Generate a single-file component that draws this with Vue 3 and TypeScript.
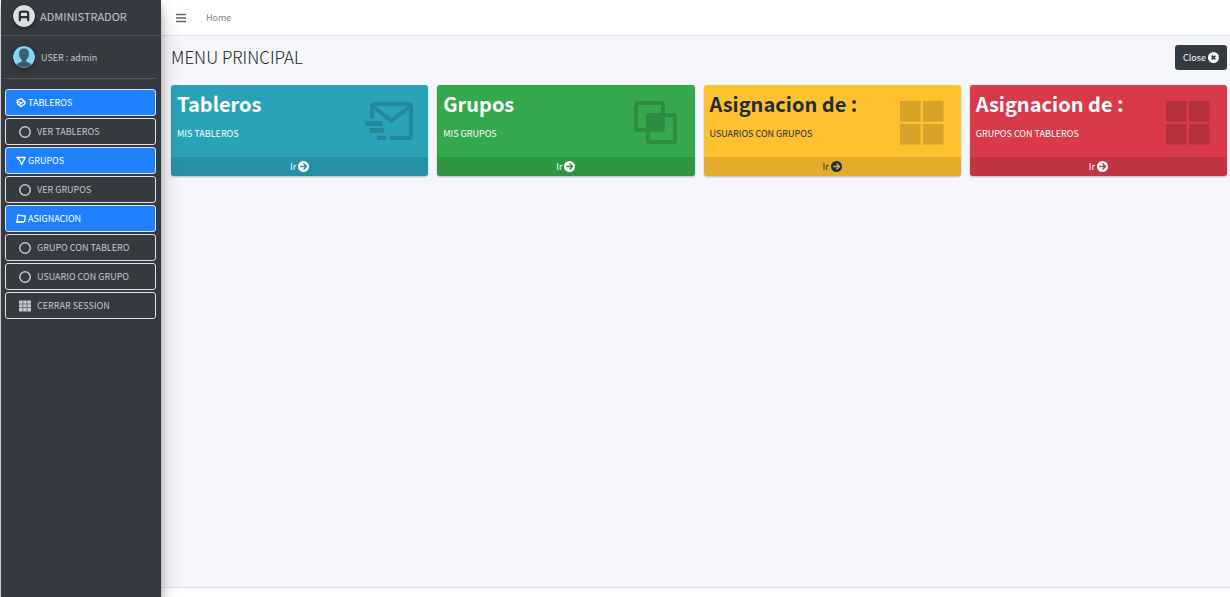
<script setup lang="ts">
interface NavEntry {
  label: string
  icon: 'direction' | 'ring' | 'send' | 'frame' | 'grid'
  active?: boolean
}

interface Card {
  title: string
  text: string
  tone: 'info' | 'success' | 'warning' | 'danger'
  icon: 'mail' | 'overlap' | 'windows'
}

const entries: NavEntry[] = [
  { label: 'TABLEROS', icon: 'direction', active: true },
  { label: 'VER TABLEROS', icon: 'ring' },
  { label: 'GRUPOS', icon: 'send', active: true },
  { label: 'VER GRUPOS', icon: 'ring' },
  { label: 'ASIGNACION', icon: 'frame', active: true },
  { label: 'GRUPO CON TABLERO', icon: 'ring' },
  { label: 'USUARIO CON GRUPO', icon: 'ring' },
  { label: 'CERRAR SESSION', icon: 'grid' },
]

const cards: Card[] = [
  { title: 'Tableros', text: 'MIS TABLEROS', tone: 'info', icon: 'mail' },
  { title: 'Grupos', text: 'MIS GRUPOS', tone: 'success', icon: 'overlap' },
  { title: 'Asignacion de :', text: 'USUARIOS CON GRUPOS', tone: 'warning', icon: 'windows' },
  { title: 'Asignacion de :', text: 'GRUPOS CON TABLEROS', tone: 'danger', icon: 'windows' },
]
</script>

<template>
  <div class="page">
    <aside class="sidebar">
      <a class="brand" href="#">
        <svg class="round" viewBox="0 0 22 22" aria-hidden="true">
          <circle cx="11" cy="11" r="11" fill="#dcdddf" />
          <path d="M6.800 16.200V8.600Q6.800 6.600 8.800 6.600H13.200Q15.200 6.600 15.200 8.600V16.200M6.800 12.200H15.200" fill="none" stroke="#2b2f34" stroke-width="2.200" />
        </svg>
        <span>ADMINISTRADOR</span>
      </a>
      <div class="user">
        <svg class="round" viewBox="0 0 22 22" aria-hidden="true">
          <circle cx="11" cy="11" r="11" fill="#86d3f5" />
          <path d="M11 2.500C7.300 2.500 5.800 5 6.100 8.200C5.700 8.400 6 10.500 6.800 10.800C7.200 12.200 7.900 13.100 8.700 13.700V15.400C7.200 16.400 4.800 16.800 3.400 18.500C7 22.800 15 22.800 18.600 18.500C17.200 16.800 14.800 16.400 13.300 15.400V13.700C14.100 13.100 14.800 12.200 15.200 10.800C16 10.500 16.300 8.400 15.900 8.200C16.200 5 14.700 2.500 11 2.500Z" fill="#3f5d71" />
        </svg>
        <a href="#">USER : admin</a>
      </div>
      <nav class="menu">
        <a v-for="e in entries" :key="e.label" href="#" class="entry" :class="{ active: e.active }">
          <svg v-if="e.icon === 'direction'" class="small" viewBox="0 0 10 10" aria-hidden="true">
            <path d="M1.200 2.200L5.600 .8L9.200 4.200L8.400 6.200L4.800 8.600L1.800 6.200Z" fill="none" stroke="currentColor" stroke-width="1.300" stroke-linejoin="round" />
            <path d="M0 4.800L3 3.600L5 5.300L7.600 3.600M3.300 6.800L5 5.300" fill="none" stroke="currentColor" stroke-width="1.200" />
          </svg>
          <svg v-else-if="e.icon === 'send'" class="small" viewBox="0 0 10 10" aria-hidden="true">
            <path d="M.8 1.500H9.200L5.600 8.600L4.200 4.800Z" fill="none" stroke="currentColor" stroke-width="1.300" stroke-linejoin="round" />
          </svg>
          <svg v-else-if="e.icon === 'frame'" class="small" viewBox="0 0 10 10" aria-hidden="true">
            <path d="M1.800 1.200L9.200 2L8.600 7.500L1 8Z" fill="none" stroke="currentColor" stroke-width="1.300" />
            <path d="M0 8H8" stroke="currentColor" stroke-width="1.500" />
          </svg>
          <svg v-else-if="e.icon === 'ring'" class="large" viewBox="0 0 12 12" aria-hidden="true">
            <circle cx="6" cy="6" r="5.200" fill="none" stroke="currentColor" stroke-width="1.500" />
          </svg>
          <svg v-else class="large" viewBox="0 0 12 12" aria-hidden="true">
            <path d="M0 .5H3.700V3.800H0ZM4.200 .5H7.800V3.800H4.200ZM8.300 .5H12V3.800H8.300ZM0 4.300H3.700V7.600H0ZM4.200 4.300H7.800V7.600H4.200ZM8.300 4.300H12V7.600H8.300ZM0 8.100H3.700V11.400H0ZM4.200 8.100H7.800V11.400H4.200ZM8.300 8.100H12V11.400H8.300Z" fill="currentColor" />
          </svg>
          <span>{{ e.label }}</span>
        </a>
      </nav>
    </aside>

    <div class="content">
      <header class="topbar">
        <button type="button" class="toggle" aria-label="Menu">
          <svg viewBox="0 0 10 10" aria-hidden="true">
            <path d="M0 1.500H10M0 5H10M0 8.500H10" stroke="currentColor" stroke-width="1.400" />
          </svg>
        </button>
        <a href="#">Home</a>
      </header>

      <main class="main">
        <div class="heading">
          <h1>MENU PRINCIPAL</h1>
          <button type="button" class="close">
            <span>Close</span>
            <svg viewBox="0 0 10 10" aria-hidden="true">
              <circle cx="5" cy="5" r="5" fill="#fff" />
              <path d="M3.300 3.300L6.700 6.700M6.700 3.300L3.300 6.700" stroke="#343a40" stroke-width="1.500" />
            </svg>
          </button>
        </div>

        <section class="cards">
          <article v-for="c in cards" :key="c.tone" class="card" :class="c.tone">
            <div class="inner">
              <div>
                <h2>{{ c.title }}</h2>
                <p>{{ c.text }}</p>
              </div>
              <svg v-if="c.icon === 'mail'" class="art" viewBox="0 0 50 50" aria-hidden="true">
                <path d="M8 22V10.500Q8 8 10.500 8H44.500Q47 8 47 10.500V39.500Q47 42 44.500 42H25.500" fill="none" stroke="currentColor" stroke-width="4" />
                <path d="M9 10.500L27.500 25L46 10.500" fill="none" stroke="currentColor" stroke-width="4" />
                <path d="M1 25H18V30H1ZM6 32H20V37H6ZM13 39.500H22V44H13Z" fill="currentColor" />
              </svg>
              <svg v-else-if="c.icon === 'overlap'" class="art" viewBox="0 0 50 50" aria-hidden="true">
                <rect x="5" y="7" width="27" height="27" rx="2" fill="none" stroke="currentColor" stroke-width="4" />
                <rect x="17" y="19" width="27" height="27" rx="2" fill="none" stroke="currentColor" stroke-width="4" />
                <rect x="17" y="19" width="15" height="15" fill="currentColor" />
              </svg>
              <svg v-else class="art" viewBox="0 0 50 50" aria-hidden="true">
                <path d="M3 5H23.500V25.500H3ZM26 5H46.500V25.500H26ZM3 28H23.500V48.500H3ZM26 28H46.500V48.500H26Z" fill="currentColor" />
              </svg>
            </div>
            <a class="go" href="#">
              <span>Ir</span>
              <svg viewBox="0 0 10 10" aria-hidden="true">
                <circle cx="5" cy="5" r="5" fill="currentColor" />
                <path class="arrow" d="M2 5H7.500M5 2.300L7.700 5L5 7.700" fill="none" stroke-width="1.300" />
              </svg>
            </a>
          </article>
        </section>
      </main>

      <footer class="footer"></footer>
    </div>
  </div>
</template>

<style>
body {
  margin: 0;
  background: #fff;
}
</style>

<style scoped>
.page {
  display: flex;
  box-sizing: border-box;
  min-height: 100vh;
  padding-left: 1px;
  color: #212529;
  font-family: "Noto Sans CJK SC", "Noto Sans", sans-serif;
  font-size: 9px;
  line-height: 17px;
}
a {
  color: inherit;
  text-decoration: none;
}
button {
  font: inherit;
  border: 0;
  cursor: pointer;
}
svg {
  display: block;
  flex: none;
}
.sidebar {
  z-index: 1;
  flex: none;
  width: 160px;
  background: #343a40;
  color: #c2c7d0;
  box-shadow: 0 9px 18px rgba(0, 0, 0, 0.25), 0 6px 6px rgba(0, 0, 0, 0.22);
}
.brand {
  display: flex;
  align-items: center;
  gap: 5px;
  box-sizing: border-box;
  height: 36px;
  padding: 0 12px 3px;
  border-bottom: 1px solid #4b545c;
  font-size: 11px;
}
.round {
  width: 22px;
  height: 22px;
  border-radius: 50%;
  box-shadow: 0 2px 4px rgba(0, 0, 0, 0.4);
}
.user {
  display: flex;
  align-items: center;
  gap: 6px;
  box-sizing: border-box;
  height: 43px;
  margin: 0 5px 10px 4px;
  padding: 0 8px;
  border-bottom: 1px solid #4f5962;
}
.menu {
  display: flex;
  flex-direction: column;
  gap: 2px;
  padding: 0 5px 0 4px;
}
.entry {
  display: flex;
  align-items: center;
  gap: 6px;
  box-sizing: border-box;
  height: 27px;
  padding: 0 13px;
  border: 1px solid #dee2e6;
  border-radius: 3px;
}
.entry.active {
  gap: 2px;
  padding: 0 10px;
  background: #1f80ff;
  color: #fff;
}
.small {
  width: 10px;
  height: 10px;
}
.large {
  width: 12px;
  height: 12px;
}
.content {
  display: flex;
  flex: 1;
  flex-direction: column;
  min-width: 0;
}
.topbar {
  display: flex;
  align-items: center;
  gap: 20px;
  box-sizing: border-box;
  height: 36px;
  padding: 0 15px;
  border-bottom: 1px solid #dee2e6;
  background: #fff;
  color: #808080;
}
.toggle {
  padding: 0;
  background: none;
  color: #666;
}
.toggle svg {
  width: 10px;
  height: 10px;
}
.main {
  flex: 1;
  padding: 9px 3px 9px 10px;
  background: #f4f6f9;
}
.heading {
  display: flex;
  align-items: flex-start;
  justify-content: space-between;
}
h1 {
  margin: 0;
  font-size: 17px;
  font-weight: 300;
  line-height: 24px;
}
.close {
  display: flex;
  align-items: center;
  gap: 2px;
  height: 25px;
  padding: 0 8px;
  border-radius: 3px;
  background: #343a40;
  color: #fff;
}
.close svg,
.go svg {
  width: 11px;
  height: 11px;
}
.cards {
  display: grid;
  grid-template-columns: repeat(4, 1fr);
  gap: 9px;
  margin-top: 15px;
}
.card {
  overflow: hidden;
  border-radius: 3px;
  color: #fff;
  box-shadow: 0 1px 2px rgba(0, 0, 0, 0.25);
}
.inner {
  display: flex;
  align-items: flex-start;
  justify-content: space-between;
  box-sizing: border-box;
  height: 72px;
  padding: 6px 14px 0 6px;
}
h2 {
  margin: 0 0 8px;
  font-size: 20px;
  font-weight: 700;
  line-height: 26px;
}
p {
  margin: 0;
}
.art {
  width: 50px;
  height: 50px;
  margin-top: 5px;
  color: #000;
  opacity: 0.15;
}
.go {
  display: flex;
  align-items: center;
  justify-content: center;
  gap: 2px;
  height: 19px;
  background: rgba(0, 0, 0, 0.1);
}
.info {
  background: #2aa2b8;
}
.success {
  background: #35a74c;
}
.warning {
  background: #fdc02f;
  color: #1f2d3d;
}
.danger {
  background: #d93a49;
}
.info .arrow {
  stroke: #2592a6;
}
.success .arrow {
  stroke: #309644;
}
.warning .arrow {
  stroke: #e4ad2a;
}
.danger .arrow {
  stroke: #c33442;
}
.footer {
  height: 9px;
  border-top: 1px solid #dee2e6;
  background: #fff;
}
</style>
